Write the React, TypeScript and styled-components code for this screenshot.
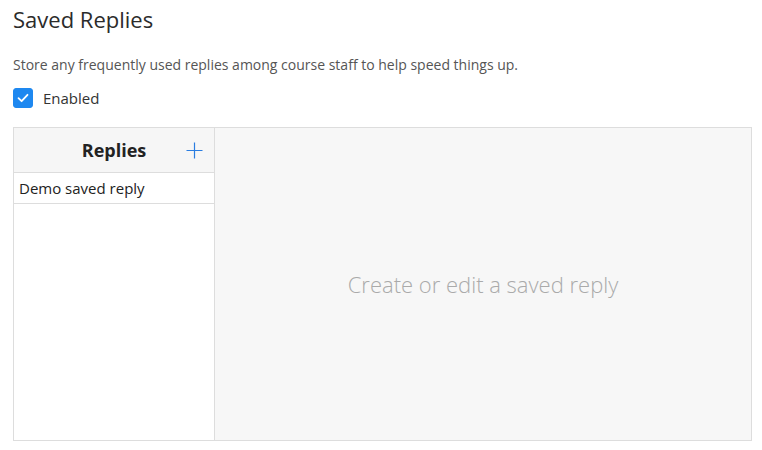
import React, { useState } from 'react'
import styled, { createGlobalStyle } from 'styled-components'

const GlobalStyle = createGlobalStyle`
  html, body {
    margin: 0;
    padding: 0;
    background: #ffffff;
  }
  body {
    font-family: 'Open Sans', 'Noto Sans', sans-serif;
    color: #333333;
  }
`

const replies = [{ id: 1, title: 'Demo saved reply' }]

const App: React.FC = () => {
  const [enabled, setEnabled] = useState(true)

  return (
    <Page>
      <GlobalStyle />
      <Title>Saved Replies</Title>
      <Description>Store any frequently used replies among course staff to help speed things up.</Description>
      <CheckRow onClick={() => setEnabled(!enabled)}>
        <CheckBox checked={enabled}>
          {enabled && (
            <svg width="14" height="14" viewBox="0 0 14 14" fill="none">
              <path d="M2.5 7.2 L5.6 10.2 L11.5 3.8" stroke="#fff" strokeWidth="1.8" strokeLinecap="round" strokeLinejoin="round" />
            </svg>
          )}
        </CheckBox>
        <CheckLabel>Enabled</CheckLabel>
      </CheckRow>
      <Panel>
        <Sidebar>
          <SidebarHeader>
            <span />
            <SidebarTitle>Replies</SidebarTitle>
            <AddButton aria-label="Add reply">
              <svg width="17" height="17" viewBox="0 0 17 17" fill="none">
                <path d="M8.5 0.5 V16.5 M0.5 8.5 H16.5" stroke="#2a7de1" strokeWidth="1.2" />
              </svg>
            </AddButton>
          </SidebarHeader>
          {replies.map(r => (
            <ReplyItem key={r.id}>{r.title}</ReplyItem>
          ))}
        </Sidebar>
        <Editor>
          <EmptyText>Create or edit a saved reply</EmptyText>
        </Editor>
      </Panel>
    </Page>
  )
}

export default App

const Page = styled('div')`
  padding: 4px 10px 10px 13px;
  width: 762px;
  box-sizing: border-box;
`

const Title = styled('h1')`
  margin: 0;
  font-size: 22px;
  font-weight: 400;
  line-height: 30px;
  color: #2b2b2b;
`

const Description = styled('p')`
  margin: 21px 0 0;
  font-size: 14px;
  line-height: 20px;
  color: #555555;
`

const CheckRow = styled('label')`
  display: flex;
  align-items: center;
  gap: 10px;
  margin-top: 13px;
  height: 20px;
  cursor: pointer;
`

const CheckBox = styled('span')<{ checked: boolean }>`
  width: 20px;
  height: 20px;
  box-sizing: border-box;
  border-radius: 3px;
  display: flex;
  align-items: center;
  justify-content: center;
  background: ${props => (props.checked ? '#1e88f0' : '#ffffff')};
  border: 1px solid ${props => (props.checked ? '#1e88f0' : '#bbbbbb')};
`

const CheckLabel = styled('span')`
  font-size: 15px;
  color: #333333;
`

const Panel = styled('div')`
  display: flex;
  margin-top: 19px;
  height: 314px;
  box-sizing: border-box;
  border: 1px solid #dddddd;
`

const Sidebar = styled('div')`
  width: 200px;
  flex-shrink: 0;
  border-right: 1px solid #dddddd;
  background: #ffffff;
`

const SidebarHeader = styled('div')`
  display: grid;
  grid-template-columns: 1fr auto 1fr;
  align-items: center;
  height: 44px;
  background: #f6f6f6;
  border-bottom: 1px solid #dddddd;
`

const SidebarTitle = styled('h2')`
  margin: 0;
  font-size: 18px;
  font-weight: 700;
  color: #222222;
`

const AddButton = styled('button')`
  justify-self: end;
  margin-right: 11px;
  padding: 0;
  border: none;
  background: transparent;
  display: flex;
  cursor: pointer;
`

const ReplyItem = styled('div')`
  height: 30px;
  display: flex;
  align-items: center;
  padding-left: 5px;
  font-size: 15px;
  color: #222222;
  border-bottom: 1px solid #dddddd;
  cursor: pointer;
`

const Editor = styled('div')`
  flex: 1;
  display: flex;
  align-items: center;
  justify-content: center;
  background: #f7f7f7;
`

const EmptyText = styled('span')`
  font-size: 22px;
  font-weight: 300;
  color: #aaaaaa;
`
